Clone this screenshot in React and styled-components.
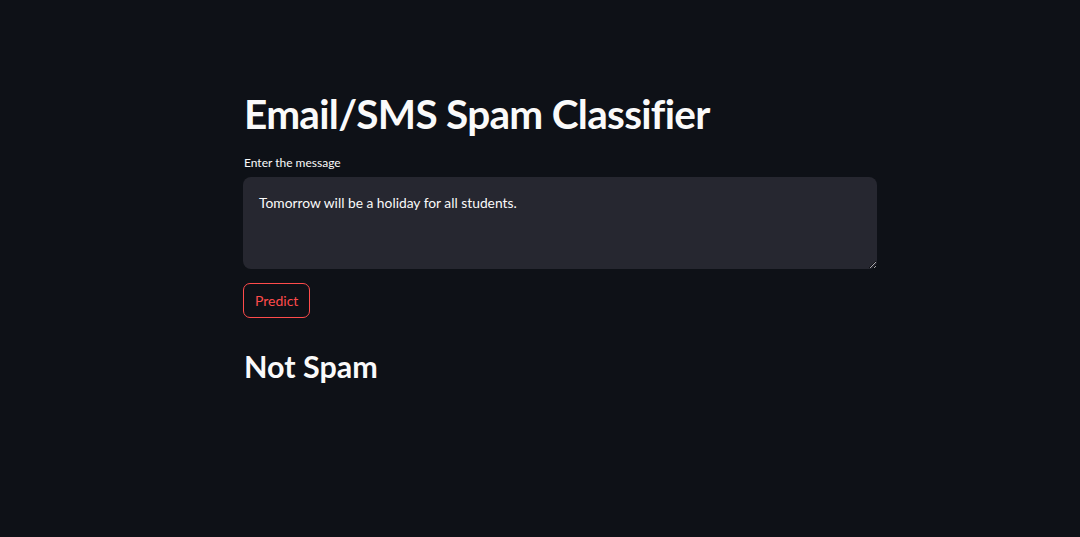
import React, { useState } from "react";
import styled, { createGlobalStyle } from "styled-components";

const GlobalStyle = createGlobalStyle`
  html, body {
    margin: 0;
    padding: 0;
    background: #0e1117;
    height: 100%;
  }
  body {
    font-family: "Lato", "Noto Sans", sans-serif;
    color: #fafafa;
  }
`;

export default function App() {
  const [message, setMessage] = useState("Tomorrow will be a holiday for all students.");
  return (
    <Page>
      <GlobalStyle />
      <Main>
        <Title>Email/SMS Spam Classifier</Title>
        <Label htmlFor="msg">Enter the message</Label>
        <TextArea id="msg" value={message} onChange={(e) => setMessage(e.target.value)} />
        <PredictBtn>Predict</PredictBtn>
        <Result>Not Spam</Result>
      </Main>
    </Page>
  );
}

const Page = styled.div`
  width: 100%;
  min-height: 537px;
  background: #0e1117;
  display: flex;
  padding-top: 88px;
  box-sizing: border-box;
`;

const Main = styled.div`
  margin-left: 243px;
  width: 634px;
  display: flex;
  flex-direction: column;
  align-items: flex-start;
`;

const Title = styled.h1`
  margin: 0 0 0 1px;
  font-size: 40.5px;
  font-weight: 700;
  line-height: 52px;
  letter-spacing: -0.7px;
  color: #fafafa;
`;

const Label = styled.label`
  margin: 15px 0 0 1px;
  font-size: 12px;
  line-height: 16px;
  color: #fafafa;
`;

const TextArea = styled.textarea`
  margin-top: 6px;
  width: 100%;
  height: 92px;
  box-sizing: border-box;
  background: #262730;
  color: #fafafa;
  border: none;
  border-radius: 8px;
  padding: 16px 16px;
  font-family: "Lato", "Noto Sans", sans-serif;
  font-size: 13.8px;
  line-height: 20px;
  resize: vertical;
  outline: none;
`;

const PredictBtn = styled.button`
  margin-top: 14px;
  height: 35px;
  padding: 0 11px;
  background: transparent;
  border: 1px solid #ff4b4b;
  border-radius: 7px;
  color: #ff4b4b;
  font-family: "Lato", "Noto Sans", sans-serif;
  font-size: 14px;
  cursor: pointer;
`;

const Result = styled.h2`
  margin: 28px 0 0 1px;
  font-size: 30.5px;
  font-weight: 700;
  line-height: 40px;
  color: #fafafa;
`;
